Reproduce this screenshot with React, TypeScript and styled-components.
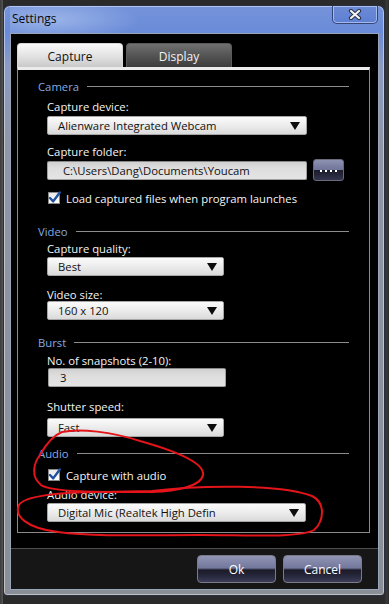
import React from "react";
import styled, { createGlobalStyle } from "styled-components";

const Global = createGlobalStyle`
  html, body { margin: 0; padding: 0; background: #2c2c2e; overflow: hidden; }
  * { box-sizing: border-box; }
  #root { width: 389px; height: 604px; }
`;

const FONT = `"Open Sans", "Noto Sans", "DejaVu Sans", sans-serif`;
const FS = "11.3px";

const Desktop = styled.div`
  position: relative;
  width: 389px;
  height: 604px;
  padding: 5px 4px 0 3px;
  background: linear-gradient(to right, #3a3a3a 0, #555 3px, #2a2a2a 3px, #2a2a2a 385px, #3b3b3b 386px, #2e2e30 100%);
  font-family: ${FONT};
`;

const Window = styled.div`
  width: 382px;
  height: 591px;
  display: flex;
  flex-direction: column;
  padding: 0 5px 5px 6px;
  border: 1px solid #2a3040;
  border-radius: 7px 7px 4px 4px;
  background: linear-gradient(
    to bottom,
    #7593da 0,
    #6a8bd8 26px,
    #8b9cc4 60px,
    #8f96a6 140px,
    #8a8e96 100%
  );
  box-shadow: inset 0 0 0 1px rgba(255, 255, 255, 0.45);
`;

const TitleBar = styled.div`
  height: 27px;
  display: flex;
  align-items: flex-start;
  justify-content: space-between;
  background: radial-gradient(ellipse 90px 22px at 40px 14px, rgba(190, 210, 245, 0.55), rgba(190, 210, 245, 0) 100%);
`;

const Title = styled.div`
  padding: 6px 0 0 2px;
  font-size: 12px;
  line-height: 14px;
  color: #0a0a0a;
`;

const CloseButton = styled.div`
  width: 46px;
  height: 18px;
  margin-right: 1px;
  border: 1px solid rgba(30, 40, 80, 0.7);
  border-top: none;
  border-radius: 0 0 5px 5px;
  box-shadow: inset 0 0 0 1px rgba(220, 230, 255, 0.55);
  background: linear-gradient(#6c8ad4, #5e80d4);
  display: flex;
  align-items: center;
  justify-content: center;
`;

const Client = styled.div`
  flex: 1;
  display: flex;
  flex-direction: column;
  background: #000;
  border: 1px solid #9aa4b8;
`;

const TabsArea = styled.div`
  padding: 9px 8px 0 6px;
`;

const TabRow = styled.div`
  display: flex;
  gap: 3px;
  height: 24px;
`;

const Tab = styled.div<{ $active?: boolean }>`
  width: 106px;
  height: 24px;
  border-radius: 4px 4px 0 0;
  display: flex;
  align-items: center;
  justify-content: center;
  font-size: 12px;
  padding-top: 1px;
  color: ${(p) => (p.$active ? "#111" : "#f2f2f2")};
  background: ${(p) =>
    p.$active
      ? "linear-gradient(#fafafa 0, #e6e6e6 45%, #c9c9c9 100%)"
      : "linear-gradient(#707070 0, #575757 45%, #3c3c3c 100%)"};
  border: 1px solid ${(p) => (p.$active ? "#d8d8d8" : "#5a5a5a")};
  border-bottom: none;
`;

const Panel = styled.div`
  display: flex;
  flex-direction: column;
  align-items: flex-start;
  border-top: 3px solid #ececec;
  border-left: 1px solid #8a8a8a;
  border-right: 1px solid #8a8a8a;
  border-bottom: 1px solid #8a8a8a;
  padding: 0 20px 10px 20px;
`;

const SectionHeader = styled.div<{ $mt: number }>`
  margin-top: ${(p) => p.$mt}px;
  align-self: stretch;
  display: flex;
  align-items: center;
  gap: 8px;
  height: 14px;
  font-size: ${FS};
  line-height: 14px;
  color: #82aae2;
  &::after {
    content: "";
    flex: 1;
    height: 1px;
    margin-top: -2px;
    background: #8c8c8c;
  }
`;

const Label = styled.div<{ $mt: number }>`
  margin-top: ${(p) => p.$mt}px;
  margin-left: 9px;
  height: 14px;
  font-size: ${FS};
  line-height: 14px;
  color: #f4f4f4;
  white-space: nowrap;
`;

const Select = styled.div<{ $mt: number; $w: number }>`
  margin-top: ${(p) => p.$mt}px;
  margin-left: 9px;
  width: ${(p) => p.$w}px;
  height: 19px;
  display: flex;
  align-items: center;
  justify-content: space-between;
  padding: 0 6px 0 10px;
  border: 1px solid #a6a6a6;
  border-radius: 2px;
  background: linear-gradient(#fbfbfb 0, #ececec 50%, #dadada 100%);
  font-size: ${FS};
  color: #111;
  white-space: nowrap;
`;

const Arrow = styled.span`
  width: 0;
  height: 0;
  border-left: 5px solid transparent;
  border-right: 5px solid transparent;
  border-top: 8px solid #0c0c0c;
`;

const TextBox = styled.div<{ $mt: number; $w: number; $ml: number; $pl: number }>`
  margin-top: ${(p) => p.$mt}px;
  margin-left: ${(p) => p.$ml}px;
  width: ${(p) => p.$w}px;
  height: 19px;
  display: flex;
  align-items: center;
  padding-left: ${(p) => p.$pl}px;
  border: 1px solid #a0a0a0;
  border-top-color: #8a8a8a;
  border-radius: 2px;
  background: linear-gradient(#d0d0d0 0, #dedede 40%, #e4e4e4 100%);
  font-size: ${FS};
  color: #111;
  white-space: nowrap;
`;

const FieldRow = styled.div<{ $mt: number }>`
  margin-top: ${(p) => p.$mt}px;
  display: flex;
  align-items: center;
  gap: 6px;
  height: 22px;
`;

const BrowseButton = styled.div`
  width: 31px;
  height: 22px;
  border: 1px solid #6a6a7a;
  border-radius: 3px;
  background: linear-gradient(#8e92b2 0, #70759a 48%, #1c1c2c 52%, #33334c 100%);
  display: flex;
  align-items: center;
  justify-content: center;
  gap: 3px;
  padding-top: 2px;
`;

const Dot = styled.span`
  width: 2px;
  height: 2px;
  background: #fff;
`;

const CheckRow = styled.div<{ $mt: number }>`
  margin-top: ${(p) => p.$mt}px;
  margin-left: 10px;
  display: flex;
  align-items: center;
  gap: 6px;
  height: 14px;
  font-size: ${FS};
  color: #f4f4f4;
  white-space: nowrap;
`;

const CheckBox = styled.div`
  width: 12px;
  height: 12px;
  background: linear-gradient(#e8e8e8, #ffffff);
  border: 1px solid #8a8a8a;
  position: relative;
`;

const Footer = styled.div`
  margin-top: 15px;
  flex: 1;
  display: flex;
  justify-content: flex-end;
  align-items: flex-start;
  gap: 7px;
  padding: 6px 16px 0 0;
  border-top: 1px solid #4e4e4e;
  background: #161616;
`;

const DialogButton = styled.div`
  width: 79px;
  height: 28px;
  border: 1px solid #7a7a88;
  border-radius: 4px;
  background: linear-gradient(#9196b6 0, #72779c 46%, #1a1a28 54%, #2a2a40 80%, #3c3c58 100%);
  display: flex;
  align-items: center;
  justify-content: center;
  color: #fff;
  font-size: 12px;
  padding-top: 1px;
`;

const Annotations = styled.svg`
  position: absolute;
  left: 0;
  top: 0;
  pointer-events: none;
`;

const Check = () => (
  <svg width="13" height="14" viewBox="0 0 13 14" style={{ position: "absolute", left: -1, top: -3 }}>
    <path d="M2 8 L5.2 11.4 L11.8 2.5" fill="none" stroke="#1f4f9e" strokeWidth="2.4" strokeLinecap="round" strokeLinejoin="round" />
  </svg>
);

export default function App() {
  return (
    <>
      <Global />
      <Desktop>
        <Window>
          <TitleBar>
            <Title>Settings</Title>
            <CloseButton>
              <svg width="14" height="11" viewBox="0 0 14 11">
                <path d="M3 2 L11 9 M11 2 L3 9" stroke="#2a2f45" strokeWidth="4.2" strokeLinecap="round" />
                <path d="M3 2 L11 9 M11 2 L3 9" stroke="#f4f4f4" strokeWidth="2.2" strokeLinecap="round" />
              </svg>
            </CloseButton>
          </TitleBar>
          <Client>
            <TabsArea>
              <TabRow>
                <Tab $active>Capture</Tab>
                <Tab>Display</Tab>
              </TabRow>
              <Panel>
                <SectionHeader $mt={10}>Camera</SectionHeader>
                <Label $mt={6}>Capture device:</Label>
                <Select $mt={2} $w={260}>
                  <span>Alienware Integrated Webcam</span>
                  <Arrow />
                </Select>
                <Label $mt={10}>Capture folder:</Label>
                <FieldRow $mt={0}>
                  <TextBox $mt={0} $ml={9} $w={260} $pl={15}>
                    C:\Users\Dang\Documents\Youcam
                  </TextBox>
                  <BrowseButton>
                    <Dot />
                    <Dot />
                    <Dot />
                    <Dot />
                  </BrowseButton>
                </FieldRow>
                <CheckRow $mt={10}>
                  <CheckBox>
                    <Check />
                  </CheckBox>
                  Load captured files when program launches
                </CheckRow>

                <SectionHeader $mt={20}>Video</SectionHeader>
                <Label $mt={3}>Capture quality:</Label>
                <Select $mt={1} $w={177}>
                  <span>Best</span>
                  <Arrow />
                </Select>
                <Label $mt={12}>Video size:</Label>
                <Select $mt={-1} $w={177}>
                  <span>160 x 120</span>
                  <Arrow />
                </Select>

                <SectionHeader $mt={16}>Burst</SectionHeader>
                <Label $mt={4}>No. of snapshots (2-10):</Label>
                <TextBox $mt={0} $ml={10} $w={178} $pl={11}>
                  3
                </TextBox>
                <Label $mt={13}>Shutter speed:</Label>
                <Select $mt={4} $w={177}>
                  <span>Fast</span>
                  <Arrow />
                </Select>

                <SectionHeader $mt={10}>Audio</SectionHeader>
                <CheckRow $mt={7}>
                  <CheckBox>
                    <Check />
                  </CheckBox>
                  Capture with audio
                </CheckRow>
                <Label $mt={6}>Audio device:</Label>
                <Select $mt={1} $w={259}>
                  <span>Digital Mic (Realtek High Defin</span>
                  <Arrow />
                </Select>
              </Panel>
            </TabsArea>
            <Footer>
              <DialogButton>Ok</DialogButton>
              <DialogButton>Cancel</DialogButton>
            </Footer>
          </Client>
        </Window>
        <Annotations width="389" height="604" viewBox="0 0 389 604">
          <path
            d="M 40 455 C 46 444, 52 436, 62 432 C 80 428, 112 432, 140 441 C 172 450, 205 462, 203 475 C 201 486, 178 491, 152 492 C 112 492, 52 493, 41 485 C 31 477, 33 464, 40 455"
            fill="none"
            stroke="#e3141a"
            strokeWidth="2"
            strokeLinecap="round"
          />
          <path
            d="M 152 491 C 200 485, 282 484, 312 496 C 326 503, 324 521, 314 530 C 300 538, 250 535, 200 535 C 150 535, 95 537, 58 532 C 26 528, 14 516, 19 505 C 24 496, 60 492, 100 492 L 152 491"
            fill="none"
            stroke="#e3141a"
            strokeWidth="2"
            strokeLinecap="round"
          />
        </Annotations>
      </Desktop>
    </>
  );
}
